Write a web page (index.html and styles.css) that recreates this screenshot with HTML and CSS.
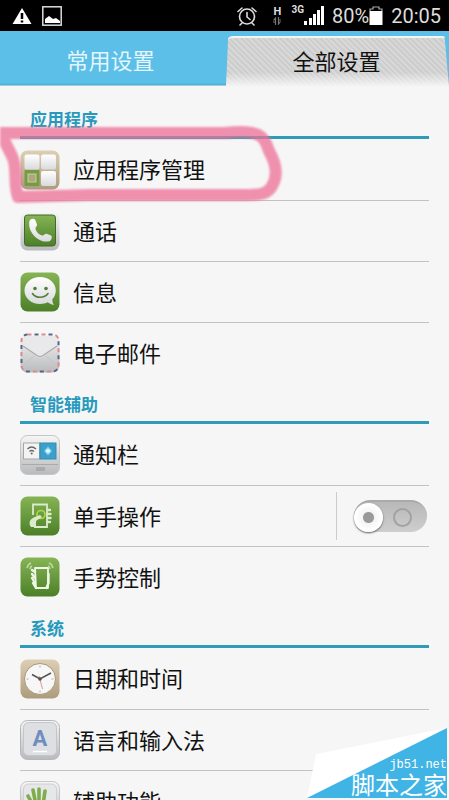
FILE: index.html
```html
<!DOCTYPE html>
<html lang="zh-CN">
<head>
    <meta charset="UTF-8">
    <meta name="viewport" content="width=device-width, initial-scale=1.0">
    <title>全部设置</title>
    <link rel="stylesheet" href="styles.css">
</head>
<body>

    <!-- Shared gradients -->
    <svg class="defs" width="0" height="0" aria-hidden="true">
        <defs>
            <linearGradient id="green" x1="0" y1="0" x2="0" y2="1">
                <stop offset="0" stop-color="#86b455"/>
                <stop offset="1" stop-color="#4c7f28"/>
            </linearGradient>
            <linearGradient id="silver" x1="0" y1="0" x2="0" y2="1">
                <stop offset="0" stop-color="#f6f6f6"/>
                <stop offset="1" stop-color="#b9babc"/>
            </linearGradient>
            <linearGradient id="white" x1="0" y1="0" x2="0" y2="1">
                <stop offset="0" stop-color="#ffffff"/>
                <stop offset="1" stop-color="#d9dadd"/>
            </linearGradient>
            <linearGradient id="sand" x1="0" y1="0" x2="0" y2="1">
                <stop offset="0" stop-color="#dccfb4"/>
                <stop offset="1" stop-color="#ad9b7c"/>
            </linearGradient>
        </defs>
    </svg>

    <div class="screen">
        <header class="status-bar">
            <svg width="20" height="18" viewBox="0 0 20 18"><path d="M10 1 19.500 17H.5z" fill="#fff"/><path d="M10 6v6M10 13.500v2" stroke="#000" stroke-width="2.500"/></svg>
            <svg width="20" height="20" viewBox="0 0 20 20"><rect x=".8" y=".8" width="18.400" height="18.400" fill="none" stroke="#ddd" stroke-width="1.500"/><path d="M3 17v-4l4-3 4 3 3-1 4 3v2z" fill="#fff"/></svg>
            <div class="status-right">
                <svg class="alarm" width="20" height="20" viewBox="0 0 20 20" fill="none" stroke="#ddd" stroke-width="1.600" stroke-linecap="round"><circle cx="10" cy="10.500" r="7.500"/><path d="M10 6.500V11l3 2.500M1 5.500 5 2M19 5.500 15 2M5 17l-2 2M15 17l2 2"/></svg>
                <div class="data">
                    <span>H</span>
                    <svg width="8" height="8" viewBox="0 0 8 8" fill="none" stroke="#777" stroke-width="1.200"><path d="M2.500 8V1L.5 3.500M5.500 0v7l2-2.500M0 5h3M5 3h3"/></svg>
                </div>
                <span class="net">3G</span>
                <svg width="20" height="20" viewBox="0 0 20 20" fill="#fff"><path d="M0 15h3v4H0zM5 12h3v7H5zM9 8h3v11H9zM13 4h3v15h-3zM17 0h3v19h-3z"/></svg>
                <span class="battery-text">80%</span>
                <svg width="14" height="20" viewBox="0 0 14 20"><path d="M1 5V3h3V1h6v2h3v2" fill="none" stroke="#aaa" stroke-width="1.200"/><path d="M.5 5h13v14H.5z" fill="#fff"/></svg>
                <span class="clock">20:05</span>
            </div>
        </header>

        <nav class="tabs">
            <button class="tab">常用设置</button>
            <button class="tab active">全部设置</button>
        </nav>

        <main class="content">
            <section>
                <h2>应用程序</h2>
                <div class="row">
                    <a href="#apps">
                        <svg class="icon" viewBox="0 0 40 40">
                            <rect x=".5" y=".5" width="39" height="39" rx="7" fill="url(#sand)"/>
                            <rect x="4.500" y="4.500" width="15" height="15" rx="2" fill="url(#white)"/>
                            <rect x="21" y="4.500" width="15" height="15" rx="2" fill="url(#white)"/>
                            <rect x="21" y="21" width="15" height="15" rx="2" fill="url(#white)"/>
                            <rect x="4.500" y="20" width="15" height="16" rx="1" fill="#769b48"/>
                            <rect x="8" y="24" width="8" height="8" fill="#b0a780" stroke="#c3d38c"/>
                        </svg>
                        <span>应用程序管理</span>
                    </a>
                </div>
                <div class="row">
                    <a href="#call">
                        <svg class="icon" viewBox="0 0 40 40">
                            <rect x=".5" y=".5" width="39" height="39" rx="7" fill="url(#silver)"/>
                            <rect x="4.500" y="4" width="31" height="31" rx="3" fill="url(#green)" stroke="#44692b"/>
                            <path d="M9.500 10c1-2.500 5-3 6-.5l1.500 4c.4 1.500-1.500 2.300-1.500 4 .6 3.500 3.500 6.300 7 7 1.700 0 2-2.200 4-1.800l4 1.500c2.500 1 1 5-1 6C19 33 7 21 9.500 10z" fill="url(#white)"/>
                        </svg>
                        <span>通话</span>
                    </a>
                </div>
                <div class="row">
                    <a href="#message">
                        <svg class="icon" viewBox="0 0 40 40">
                            <rect x=".5" y=".5" width="39" height="39" rx="7" fill="url(#green)"/>
                            <path d="M20 5C11 5 4.500 11 4.500 18.500S11 32 20 32c3 0 5.500-.6 7.700-1.700 1.300 1.200 3.500 2.200 6.300 2.700-1.200-1.600-1.700-3.700-1.700-5.700 2.200-2.400 3.500-5.400 3.500-8.800C35.800 11 29 5 20 5z" fill="url(#white)"/>
                            <circle cx="15" cy="16.500" r="1.800" fill="#557c37"/>
                            <circle cx="26" cy="16.500" r="1.800" fill="#557c37"/>
                            <path d="M12.500 21.500c3 5 12 5 15.500 0" fill="none" stroke="#557c37" stroke-width="1.600" stroke-linecap="round"/>
                        </svg>
                        <span>信息</span>
                    </a>
                </div>
                <div class="row">
                    <a href="#email">
                        <svg class="icon" viewBox="0 0 40 40">
                            <rect x=".5" y=".5" width="39" height="39" rx="7" fill="url(#silver)"/>
                            <rect x="1.500" y="1.500" width="37" height="37" rx="6" fill="none" stroke="#dc8b8c" stroke-width="2" stroke-dasharray="4 10"/>
                            <rect x="1.500" y="1.500" width="37" height="37" rx="6" fill="none" stroke="#56688a" stroke-width="2" stroke-dasharray="4 10" stroke-dashoffset="7"/>
                            <path d="M3 33 14 23M37 33 26 23" stroke="#c4c4c8" fill="none"/>
                            <path d="M3 12v2l15 10q2 1.500 4 0l15-10V8q0-5-5-5H8Q3 3 3 8z" fill="#e9e9eb"/>
                            <path d="M3 13l14 9.500q3 2 6 0L37 13" fill="none" stroke="#aaaaae" stroke-width="1.300"/>
                        </svg>
                        <span>电子邮件</span>
                    </a>
                </div>
            </section>

            <section>
                <h2>智能辅助</h2>
                <div class="row">
                    <a href="#notification">
                        <svg class="icon" viewBox="0 0 40 40">
                            <rect x=".5" y=".5" width="39" height="39" rx="7" fill="url(#silver)" stroke="#c5c5c7"/>
                            <rect x="3.500" y="8" width="16" height="16" fill="#f3f3f3" stroke="#a4a7aa"/>
                            <rect x="20" y="8" width="16" height="16" fill="#3ba0cb" stroke="#348bb1"/>
                            <path d="M7.500 14q4-4 8.500 0M9.500 16.500q2-2 4.500 0" fill="none" stroke="#666" stroke-width="1.300"/>
                            <circle cx="11.700" cy="18.500" r="1" fill="#666"/>
                            <path d="M28 11.500 32 16l-4 4.500-4-4.500z" fill="#8bd3f0"/>
                            <circle cx="28" cy="16" r="2" fill="#e6f8ff"/>
                            <path d="M2 29.500h36" stroke="#aaa"/>
                            <path d="M16 33h9M16 35h9" stroke="#929496"/>
                        </svg>
                        <span>通知栏</span>
                    </a>
                </div>
                <div class="row">
                    <a href="#onehand">
                        <svg class="icon" viewBox="0 0 40 40">
                            <rect x=".5" y=".5" width="39" height="39" rx="7" fill="url(#green)"/>
                            <path d="M13 19V8.500h14V31H14" fill="none" stroke="#dceccb" stroke-width="1.800"/>
                            <circle cx="21" cy="18.500" r="4" fill="none" stroke="#aedb42" stroke-width="1.600"/>
                            <path d="M20 19l-5 2c-5 1.500-7 6-4 10h5v-5q0-2 3-3l3-2z" fill="#dceccb"/>
                            <path d="M28 14h2M28 18h2.500M28 22h2.500M28 26h2" stroke="#dceccb" stroke-width="2.400" stroke-linecap="round"/>
                        </svg>
                        <span>单手操作</span>
                    </a>
                    <div class="switch-box">
                        <input type="checkbox" class="switch" aria-label="单手操作">
                    </div>
                </div>
                <div class="row">
                    <a href="#gesture">
                        <svg class="icon" viewBox="0 0 40 40">
                            <rect x=".5" y=".5" width="39" height="39" rx="7" fill="url(#green)"/>
                            <path d="M15 11h13v20H16z" fill="none" stroke="#eef6e5" stroke-width="1.800" stroke-linejoin="round"/>
                            <path d="M12 13l3 2M12 17l3 4M12 21l3 5M13 26l3 5M28.500 17v9l-2 5" fill="none" stroke="#eef6e5" stroke-width="2.400" stroke-linecap="round"/>
                            <path d="M7 11q1-4 4-5M10 12q0-2 2-3M29 6q3 1 4 5M28 9q2 1 2 3" fill="none" stroke="#bfd9a4" stroke-width="1.500"/>
                        </svg>
                        <span>手势控制</span>
                    </a>
                </div>
            </section>

            <section>
                <h2>系统</h2>
                <div class="row">
                    <a href="#datetime">
                        <svg class="icon" viewBox="0 0 40 40">
                            <rect x=".5" y=".5" width="39" height="39" rx="7" fill="url(#sand)"/>
                            <circle cx="20" cy="20" r="15.500" fill="#f7f7f7" stroke="#a7967a"/>
                            <path d="M20 6.500v2M20 31.500v2M6.500 20h2M31.500 20h2" stroke="#aaa"/>
                            <path d="M12 15.500 20 20l11-6" fill="none" stroke="#55504b" stroke-width="1.500"/>
                            <path d="M19 17l3.500 13" stroke="#d99a90"/>
                            <circle cx="20" cy="20" r="1.800" fill="#55504b"/>
                        </svg>
                        <span>日期和时间</span>
                    </a>
                </div>
                <div class="row">
                    <a href="#language">
                        <svg class="icon" viewBox="0 0 40 40">
                            <rect x=".5" y=".5" width="39" height="39" rx="7" fill="url(#silver)" stroke="#b5b6b8"/>
                            <rect x="3.500" y="2.500" width="33" height="33" rx="5" fill="#dedfe2" stroke="#c5c6c9"/>
                            <text class="key" x="20" y="26" text-anchor="middle">A</text>
                            <path d="M13 31.500h14" stroke="#fff" stroke-width="1.500"/>
                        </svg>
                        <span>语言和输入法</span>
                    </a>
                </div>
                <div class="row">
                    <a href="#accessibility">
                        <svg class="icon" viewBox="0 0 40 40">
                            <rect x=".5" y=".5" width="39" height="39" rx="7" fill="url(#silver)" stroke="#c5c6c8"/>
                            <rect x="3.500" y="3" width="33" height="33" rx="5" fill="#e6e7e8" stroke="#cfcfd1"/>
                            <path d="M8 15l6 11M13 9l3 15M19 8v16M25 10l-2 14M31 22l-6 6" stroke="#80ad4b" stroke-width="3.600" stroke-linecap="round"/>
                            <path d="M13 23h13l-2 12h-7z" fill="#80ad4b"/>
                        </svg>
                        <span>辅助功能</span>
                    </a>
                </div>
            </section>
        </main>

        <!-- Pink marker round the first row -->
        <svg class="marker" width="290" height="90" viewBox="0 0 290 90" aria-hidden="true">
            <path d="M-2 13H225C262 9 264 17 269 31C277 45 278 56 272 66C268 74 260 75 245 75H90L18 77C13 64 18 47 12 36L2 16" fill="none" stroke="#ee6f98" stroke-width="12" stroke-linecap="round" stroke-linejoin="round"/>
        </svg>

        <div class="watermark">
            <svg width="140" height="70" viewBox="0 0 140 70" aria-hidden="true">
                <path d="M9 26 140 0 0 70z" fill="#fff"/>
                <path d="M140 0v70H0z" fill="#41b4e6"/>
            </svg>
            <div class="watermark-text">
                <span class="site">jb51.net</span>
                <span class="name">脚本之家</span>
            </div>
        </div>
    </div>

</body>
</html>
```

FILE: styles.css
```css
* {
    box-sizing: border-box;
}

body {
    margin: 0;
    font-family: "Noto Sans CJK SC", sans-serif;
    background: #f6f6f6;
    color: #111;
}

.defs {
    position: absolute;
}

.screen {
    position: relative;
    height: 100vh;
    overflow: hidden;
}

.status-bar {
    display: flex;
    align-items: center;
    gap: 10px;
    height: 31px;
    padding: 0 8px 0 12px;
    background: #000;
    color: #ddd;
    font-family: Roboto, sans-serif;
    font-size: 20px;
}

.status-right {
    display: flex;
    align-items: center;
    margin-left: auto;
}

.alarm {
    margin-right: 16px;
}

.data {
    display: flex;
    flex-direction: column;
    align-items: center;
    margin-right: 10px;
    font-size: 11px;
    font-weight: bold;
    line-height: 11px;
}

.net {
    align-self: flex-start;
    font-size: 10px;
    font-weight: bold;
    line-height: 12px;
}

.battery-text,
.clock {
    margin-left: 8px;
}

.tabs {
    display: flex;
    height: 56px;
    background: linear-gradient(#5bbfe8 52px, #4aa9d0 54px, #f6f6f6 55px);
}

.tab {
    flex: 1;
    padding: 0;
    border: none;
    background: none;
    color: #e4f6fd;
    font-family: inherit;
    font-size: 22px;
    line-height: 32px;
}

.tab.active {
    height: 51px;
    margin: 5px 0 0 5px;
    padding: 0 2px 6px 0;
    border-top: 2px solid #f4f4f4;
    border-radius: 7px 7px 0 0;
    background:
        linear-gradient(transparent 70%, #f6f6f6),
        repeating-linear-gradient(45deg, #cdcdcd 0, #cdcdcd 2px, #d8d8d8 2px, #d8d8d8 4px);
    clip-path: polygon(1% 0, 98% 0, 100% 100%, 0 100%);
    color: #111;
}

.content {
    padding: 11px 20px 0;
}

h2 {
    height: 41px;
    margin: 0;
    padding: 8px 10px 0;
    border-bottom: 3px solid #2e9cb9;
    color: #2799bd;
    font-size: 17px;
    line-height: 26px;
}

.row {
    display: flex;
    align-items: center;
    height: 61px;
}

.row + .row {
    border-top: 1px solid #c2c2c2;
}

.row a {
    display: flex;
    flex: 1;
    align-items: center;
    gap: 13px;
    color: #111;
    font-size: 22px;
    line-height: 32px;
    text-decoration: none;
}

.row span {
    padding-bottom: 3px;
}

.icon {
    width: 40px;
    height: 40px;
}

.key {
    font-family: Roboto, sans-serif;
    font-size: 22px;
    font-weight: bold;
    fill: #6f8dbd;
}

.switch-box {
    display: flex;
    align-items: center;
    height: 48px;
    padding-left: 17px;
    border-left: 1px solid #ccc;
}

.switch {
    display: flex;
    align-items: center;
    justify-content: space-between;
    width: 73px;
    height: 32px;
    margin: 0 2px 0 0;
    padding-right: 15px;
    border-top: 2px solid #aaa;
    border-radius: 16px;
    background: linear-gradient(#b8b8b8, #cecece);
    appearance: none;
}

.switch::before {
    content: "";
    width: 29px;
    height: 29px;
    border-radius: 50%;
    background: radial-gradient(circle, #999 0, #999 5px, #f4f4f4 6px, #fff 13px);
    box-shadow: 0 1px 2px #555;
}

.switch::after {
    content: "";
    width: 15px;
    height: 15px;
    border: 2px solid #a2a2a2;
    border-radius: 50%;
}

.switch:checked {
    background: #8ec5dc;
}

.marker {
    position: absolute;
    top: 120px;
    left: 0;
    opacity: 0.75;
    pointer-events: none;
    filter: blur(1px);
}

.watermark {
    position: absolute;
    right: 2px;
    bottom: 2px;
}

.watermark svg {
    display: block;
}

.watermark-text {
    position: absolute;
    right: 0;
    bottom: 0;
    display: flex;
    flex-direction: column;
    align-items: flex-end;
    color: #fff;
    white-space: nowrap;
}

.site {
    font-family: "Liberation Mono", monospace;
    font-size: 12px;
    line-height: 10px;
}

.name {
    font-size: 24px;
    line-height: 28px;
}
```
